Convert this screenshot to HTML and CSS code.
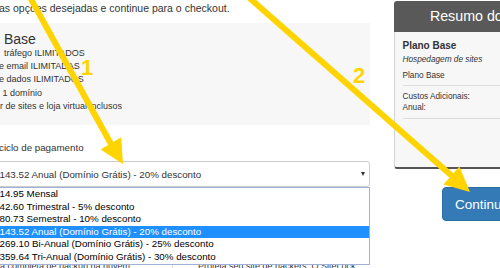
FILE: index.html
```html
<!DOCTYPE html>
<html lang="pt-BR">
<head>
  <meta charset="UTF-8" />
  <title>Checkout - Plano Base</title>
  <meta name="viewport" content="width=device-width, initial-scale=1.0" />
  <link rel="stylesheet" href="styles.css">
</head>
<body>
  <div class="page">
    <div class="main">
      <p class="intro">as opções desejadas e continue para o checkout.</p>

      <div class="plan">
        <h3 class="plan-title">Base</h3>
        <ul class="features">
          <li class="ind-4">tráfego ILIMITADOS</li>
          <li class="ind-0">e email ILIMITADAS</li>
          <li class="ind-0">e dados ILIMITADOS</li>
          <li class="ind-2">1 domínio</li>
          <li>r de sites e loja virtual inclusos</li>
        </ul>
      </div>

      <label class="field-label">ciclo de pagamento</label>
      <div class="select">
        <span>143.52 Anual (Domínio Grátis) - 20% desconto</span>
        <span class="caret"></span>
      </div>
      <ul class="options">
        <li>14.95 Mensal</li>
        <li>42.60 Trimestral - 5% desconto</li>
        <li>80.73 Semestral - 10% desconto</li>
        <li class="selected">143.52 Anual (Domínio Grátis) - 20% desconto</li>
        <li>269.10 Bi-Anual (Domínio Grátis) - 25% desconto</li>
        <li>359.64 Tri-Anual (Domínio Grátis) - 30% desconto</li>
      </ul>

      <div class="addons">
        <div class="addon">a completa de backup na nuvem</div>
        <div class="addon">Proteja seu site de hackers. O SiteLock</div>
      </div>
    </div>

    <aside class="sidebar">
      <div class="summary">
        <div class="summary-head">Resumo do Pedido</div>
        <div class="summary-body">
          <div class="sum-name">Plano Base</div>
          <div class="sum-group">Hospedagem de sites</div>
          <div class="sum-row sum-plan">Plano Base</div>
          <hr>
          <div class="sum-costs">
            <div class="sum-row">Custos Adicionais:</div>
            <div class="sum-row">Anual:</div>
          </div>
          <hr>
        </div>
      </div>
      <button class="btn-continue">Continuar</button>
    </aside>
  </div>

  <!-- annotation arrows drawn over the page -->
  <svg class="marks" width="500" height="268" viewBox="0 0 500 268">
    <line x1="28.7" y1="-5" x2="111" y2="144" stroke="#ffd400" stroke-width="6" />
    <polygon points="123,164 121.2,137.2 100.6,149.4" fill="#ffd400" />
    <text x="87" y="75" class="mark-num">1</text>

    <line x1="246" y1="-5" x2="452" y2="176" stroke="#ffd400" stroke-width="6" />
    <polygon points="470,192 459.4,166.4 443.4,184.4" fill="#ffd400" />
    <text x="359" y="82.5" class="mark-num">2</text>
  </svg>
</body>
</html>
```

FILE: styles.css
```css
html, body {
  margin: 0;
  overflow: hidden;
}
body {
  font-family: "Liberation Sans", Arial, sans-serif;
  color: #333;
  background: #fff;
  position: relative;
}
.page {
  display: grid;
  grid-template-columns: 370px 193px;
  column-gap: 24px;
  width: 587px;
}
.intro {
  margin: 0;
  font-size: 10.5px;
  line-height: 16px;
  text-indent: -1px;
  white-space: nowrap;
}
.plan {
  margin-top: 7px;
  height: 102px;
  box-sizing: border-box;
  padding-top: 8.5px;
  background: #f7f7f7;
}
.plan-title {
  margin: 0;
  padding-left: 4px;
  font-size: 14px;
  font-weight: normal;
  line-height: 15px;
}
.features {
  list-style: none;
  margin: 0;
  padding: 0;
  font-size: 9px;
  line-height: 13.4px;
  white-space: nowrap;
}
.ind-4 { padding-left: 4px; }
.ind-2 { padding-left: 2.5px; }
.ind-0 { text-indent: -1px; }
.field-label {
  display: block;
  margin-top: 16px;
  font-size: 9.75px;
  line-height: 14px;
  text-indent: -1px;
}
.select {
  margin: 6px 0 0 -6px;
  width: 376px;
  height: 26px;
  box-sizing: border-box;
  border: 1px solid #ccc;
  border-radius: 3px;
  display: flex;
  align-items: center;
  justify-content: space-between;
  padding: 0 4px 0 4.5px;
  font-size: 9.75px;
  white-space: nowrap;
  background: #fff;
}
.caret {
  width: 0;
  height: 0;
  border-left: 2.5px solid transparent;
  border-right: 2.5px solid transparent;
  border-top: 4px solid #333;
}
.options {
  position: relative;
  z-index: 1;
  list-style: none;
  margin: 0 0 0 -6px;
  padding: 0;
  width: 376px;
  box-sizing: border-box;
  border: 1px solid #9fb1d9;
  background: #fff;
  font-size: 9.75px;
  line-height: 12.6px;
  color: #000;
  white-space: nowrap;
}
.options li {
  padding-left: 4.5px;
}
.options .selected {
  background: #1e90ff;
  color: #fff;
}
.addons {
  display: flex;
  margin-top: -4px;
  font-size: 9px;
  line-height: 11px;
  white-space: nowrap;
}
.addon:first-child {
  width: 172px;
  border-right: 1px solid #ddd;
}
.addon + .addon {
  padding-left: 25px;
}
.sidebar {
  padding-top: 1px;
}
.summary-head {
  background: #595959;
  color: #fff;
  font-size: 14.25px;
  line-height: 31px;
  text-align: center;
  border-radius: 3px 3px 0 0;
  white-space: nowrap;
}
.summary-body {
  height: 137px;
  box-sizing: border-box;
  padding: 7px 0 0 7.5px;
  background: #f7f7f7;
  border-left: 1px solid #d5d5d5;
  border-bottom: 2px solid #555;
  border-radius: 0 0 0 3px;
}
.sum-name {
  font-size: 10px;
  font-weight: bold;
  line-height: 13px;
}
.sum-group {
  margin-top: 1.5px;
  font-size: 8.25px;
  font-style: italic;
  line-height: 12px;
}
.sum-row {
  font-size: 8.25px;
  line-height: 11.5px;
}
.sum-plan {
  margin-top: 4.2px;
  line-height: 12px;
}
.summary-body hr {
  margin: 3.8px 0 0;
  border: 0;
  border-top: 1px solid #ddd;
}
.sum-costs {
  padding-top: 4.5px;
}
.btn-continue {
  display: block;
  margin: 18px 0 0 48px;
  height: 34px;
  padding: 0 12px;
  background: #337ab7;
  border: 1px solid #2e6da4;
  border-radius: 4px;
  color: #fff;
  font-family: inherit;
  font-size: 13.5px;
  white-space: nowrap;
}
.marks {
  position: absolute;
  top: 0;
  left: 0;
  pointer-events: none;
  z-index: 5;
}
.mark-num {
  font-family: "Liberation Sans", Arial, sans-serif;
  font-weight: bold;
  font-size: 22px;
  fill: #ffd400;
  text-anchor: middle;
}
```
